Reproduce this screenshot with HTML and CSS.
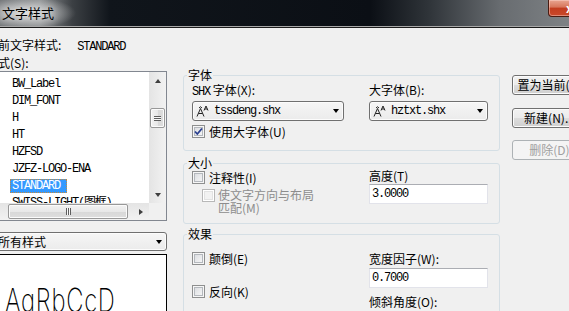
FILE: index.html
```html
<!DOCTYPE html>
<html lang="zh-CN">
<head>
    <meta charset="UTF-8">
    <title>文字样式</title>
    <link rel="stylesheet" href="styles.css">
</head>
<body>
    <div id="dialog">
        <div id="titlebar">
            <span class="title">文字样式</span>
            <span class="close-btn">x</span>
        </div>

        <div id="main">
            <!-- left: style list and preview -->
            <div class="left-col">
                <div class="current">当前文字样式:<span class="mono cur-name">STANDARD</span></div>
                <div class="caption">样式(S):</div>
                <div class="style-list">
                    <div class="list-items">
                        <div class="item mono">BW_Label</div>
                        <div class="item mono">DIM_FONT</div>
                        <div class="item mono">H</div>
                        <div class="item mono">HT</div>
                        <div class="item mono">HZFSD</div>
                        <div class="item mono">JZFZ-LOGO-ENA</div>
                        <div class="item mono selected">STANDARD</div>
                        <div class="item mono">SWISS-LIGHT(图框)</div>
                    </div>
                    <div class="vscroll">
                        <div class="sb-btn"><span class="tri up"></span></div>
                        <div class="sb-track v">
                            <div class="thumb v"><span class="grip h"></span></div>
                        </div>
                        <div class="sb-btn"><span class="tri down"></span></div>
                    </div>
                    <div class="hscroll">
                        <div class="sb-btn"><span class="tri left"></span></div>
                        <div class="sb-track h">
                            <div class="thumb h"><span class="grip v"></span></div>
                        </div>
                        <div class="sb-btn"><span class="tri right"></span></div>
                    </div>
                    <div class="corner"></div>
                </div>
                <div class="combo filter">所有样式<span class="arrow"></span></div>
                <div class="preview"><span class="sample">AgRbCcD</span></div>
            </div>

            <!-- middle: option groups -->
            <div class="groups">
                <fieldset class="group font-group">
                    <legend>字体</legend>
                    <div class="grid">
                        <div class="field-label"><span class="mono">SHX</span> 字体(X):</div>
                        <div class="field-label">大字体(B):</div>
                        <div class="combo">
                            <svg class="font-icon" width="13" height="12" viewBox="0 0 13 12">
                                <path d="M1 11.5 L4.5 3.5 L8 11.5 M2.6 8.5 H6.4 M3 3 Q4.5 0.5 6 3 M8 5.5 L10 1 L12 5.5 M8.8 4 H11.2" fill="none" stroke="#222" stroke-width="1"/>
                            </svg>
                            <span class="mono">tssdeng.shx</span>
                            <span class="arrow"></span>
                        </div>
                        <div class="combo">
                            <svg class="font-icon" width="13" height="12" viewBox="0 0 13 12">
                                <path d="M1 11.5 L4.5 3.5 L8 11.5 M2.6 8.5 H6.4 M3 3 Q4.5 0.5 6 3 M8 5.5 L10 1 L12 5.5 M8.8 4 H11.2" fill="none" stroke="#222" stroke-width="1"/>
                            </svg>
                            <span class="mono">hztxt.shx</span>
                            <span class="arrow"></span>
                        </div>
                        <div class="check">
                            <span class="box">
                                <svg width="11" height="11" viewBox="0 0 11 11">
                                    <path d="M2 5.5 L4.3 8 L9 2.5" fill="none" stroke="#2a3f8f" stroke-width="1.8"/>
                                </svg>
                            </span>
                            使用大字体(U)
                        </div>
                    </div>
                </fieldset>

                <fieldset class="group size-group">
                    <legend>大小</legend>
                    <div class="grid">
                        <div class="cell">
                            <div class="check"><span class="box"></span>注释性(I)</div>
                            <div class="check sub disabled">
                                <span class="box"></span>
                                <span class="two-line">使文字方向与布局<br>匹配(M)</span>
                            </div>
                        </div>
                        <div class="cell">
                            <div class="field-label tight">高度(T)</div>
                            <div class="input mono">3.0000</div>
                        </div>
                    </div>
                </fieldset>

                <fieldset class="group effect-group">
                    <legend>效果</legend>
                    <div class="grid">
                        <div class="cell left-checks">
                            <div class="check"><span class="box"></span>颠倒(E)</div>
                            <div class="check second"><span class="box"></span>反向(K)</div>
                        </div>
                        <div class="cell right-fields">
                            <div class="field-label">宽度因子(W):</div>
                            <div class="input mono">0.7000</div>
                            <div class="field-label gap">倾斜角度(O):</div>
                            <div class="input mono">0</div>
                        </div>
                    </div>
                </fieldset>
            </div>

            <!-- right: command buttons -->
            <div class="buttons">
                <div class="btn">置为当前(C)</div>
                <div class="btn">新建(N)...</div>
                <div class="btn disabled">删除(D)</div>
            </div>
        </div>
    </div>
</body>
</html>
```

FILE: styles.css
```css
body {
    margin: 0;
    padding: 0;
    width: 569px;
    height: 311px;
    overflow: hidden;
    background-color: #f0f0f0;
    color: #000000;
    font-family: "Noto Sans CJK SC", "DejaVu Sans", sans-serif;
    font-size: 12px;
}

.mono {
    font-family: "Liberation Mono", "Noto Sans CJK SC", monospace;
    font-size: 12px;
    letter-spacing: -1.2px;
}

/* title bar */
#titlebar {
    display: flex;
    justify-content: space-between;
    height: 26px;
    border-bottom: 1px solid #a8a8a8;
    box-shadow: 0 1px 0 #1c1c1c;
    background:
        radial-gradient(ellipse 50px 16px at 26px 13px, rgba(225, 225, 225, 0.95), rgba(200, 200, 200, 0)),
        linear-gradient(90deg, #707376 0, #8d9092 40px, #3c4044 72px, #10151b 110px, #0b0f15 370px, #30353a 430px, #686c70 500px, #7e8285 569px);
}

.title {
    padding-left: 2px;
    line-height: 26px;
    font-size: 13px;
    color: #000000;
    text-shadow: 0 0 6px #e8e8e8;
}

.close-btn {
    width: 43px;
    height: 17px;
    margin-right: -22px;
    padding-left: 17px;
    box-sizing: border-box;
    border: 1px solid #4a1c12;
    border-top: none;
    border-radius: 0 0 4px 4px;
    background: linear-gradient(#e9a591 0, #d7755a 45%, #c23d1f 50%, #c9482b 100%);
    box-shadow: inset 0 0 0 1px rgba(255, 220, 210, 0.45);
    color: #ffffff;
    font-weight: bold;
    font-size: 12px;
    line-height: 15px;
}

#main {
    display: flex;
    gap: 16px;
    margin-top: 2px;
    margin-left: -14px;
}

/* left column */
.left-col {
    width: 181px;
    flex-shrink: 0;
}

.current {
    margin-top: 8px;
    line-height: 16px;
    white-space: nowrap;
}

.cur-name {
    margin-left: 16px;
}

.caption {
    line-height: 16px;
}

.style-list {
    display: grid;
    grid-template-columns: 1fr 17px;
    grid-template-rows: 131px 17px;
    height: 150px;
    box-sizing: border-box;
    border: 1px solid #828790;
    background-color: #ffffff;
}

.list-items {
    overflow: hidden;
    padding-top: 2px;
    padding-left: 23px;
}

.item {
    width: fit-content;
    height: 14px;
    margin-top: 3px;
    padding: 0 7px 0 2px;
    line-height: 14px;
    white-space: nowrap;
    box-sizing: border-box;
}

.item.selected {
    background-color: #3399ff;
    color: #ffffff;
    outline: 1px dotted #c98a3a;
    outline-offset: -1px;
}

.vscroll {
    display: flex;
    flex-direction: column;
    background: linear-gradient(90deg, #e4e4e4, #f2f2f2);
}

.hscroll {
    display: flex;
    background: linear-gradient(#e4e4e4, #f2f2f2);
}

.corner {
    background-color: #f0f0f0;
}

.sb-btn {
    width: 17px;
    height: 17px;
    flex-shrink: 0;
    display: flex;
    align-items: center;
    justify-content: center;
}

.sb-track {
    flex: 1;
}

.thumb {
    box-sizing: border-box;
    border: 1px solid #989898;
    border-radius: 2px;
    display: flex;
    align-items: center;
    justify-content: center;
    box-shadow: inset 0 0 0 1px #fbfbfb;
}

.thumb.v {
    margin: 19px 1px 0 1px;
    height: 20px;
    background: linear-gradient(90deg, #f2f2f2, #e8e8e8 50%, #d8d8d8 51%, #dedede);
}

.thumb.h {
    margin: 1px 0 0 4px;
    width: 120px;
    height: 15px;
    background: linear-gradient(#f2f2f2, #e8e8e8 50%, #d8d8d8 51%, #dedede);
}

.grip.h {
    width: 7px;
    height: 5px;
    background: repeating-linear-gradient(#5e5e5e 0 1px, #f8f8f8 1px 2px);
}

.grip.v {
    width: 5px;
    height: 7px;
    background: repeating-linear-gradient(90deg, #5e5e5e 0 1px, #f8f8f8 1px 2px);
}

.tri {
    width: 0;
    height: 0;
}

.tri.up {
    border-left: 3.5px solid transparent;
    border-right: 3.5px solid transparent;
    border-bottom: 4px solid #3f3f3f;
}

.tri.down {
    border-left: 3.5px solid transparent;
    border-right: 3.5px solid transparent;
    border-top: 4px solid #3f3f3f;
}

.tri.left {
    border-top: 3.5px solid transparent;
    border-bottom: 3.5px solid transparent;
    border-right: 4px solid #3f3f3f;
}

.tri.right {
    border-top: 3.5px solid transparent;
    border-bottom: 3.5px solid transparent;
    border-left: 4px solid #3f3f3f;
}

/* combo boxes */
.combo {
    display: flex;
    align-items: center;
    height: 20px;
    box-sizing: border-box;
    padding-left: 3px;
    border: 1px solid #707070;
    border-radius: 3px;
    background: linear-gradient(#f6f6f6, #ebebeb);
    box-shadow: inset 0 0 0 1px #fcfcfc;
    white-space: nowrap;
}

.font-icon {
    margin-right: 5px;
    flex-shrink: 0;
}

.arrow {
    margin-left: auto;
    margin-right: 4px;
    border-left: 3.5px solid transparent;
    border-right: 3.5px solid transparent;
    border-top: 4px solid #000000;
}

.combo.filter {
    height: 19px;
    margin-top: 11px;
    padding-left: 11px;
}

.preview {
    height: 80px;
    margin-top: 3px;
    border: 1px solid #000000;
    background-color: #ffffff;
    overflow: hidden;
}

.sample {
    display: inline-block;
    margin: 25px 0 0 18px;
    font-family: Inter, "DejaVu Sans", sans-serif;
    font-weight: 200;
    font-size: 33px;
    line-height: 40px;
    letter-spacing: 1px;
    transform: scaleX(0.72);
    transform-origin: left top;
}

/* option groups */
.groups {
    width: 317px;
    flex-shrink: 0;
    margin-top: 40px;
}

.group {
    margin: 0;
    padding: 0 11px 10px 8px;
    border: 1px solid #d5dfe5;
    border-radius: 3px;
    min-width: 0;
}

.group legend {
    margin-left: -5px;
    padding: 0 1px;
    line-height: 12px;
}

.grid {
    display: grid;
    grid-template-columns: 152px 119px;
    column-gap: 25px;
}

.font-group {
    padding-bottom: 11px;
}

.font-group .grid {
    grid-template-rows: 16px 20px 15px;
    row-gap: 3px;
    padding-top: 1px;
}

.field-label {
    line-height: 16px;
    white-space: nowrap;
}

.field-label.tight {
    line-height: 14px;
}

.field-label.gap {
    margin-top: 6px;
}

.check {
    display: flex;
    align-items: center;
    gap: 4px;
    height: 16px;
    white-space: nowrap;
}

.font-group .check {
    height: 15px;
}

.box {
    width: 13px;
    height: 13px;
    flex-shrink: 0;
    box-sizing: border-box;
    border: 1px solid #8e8f8f;
    background: linear-gradient(135deg, #d6d8dc, #fbfbfb);
    box-shadow: inset 0 0 0 1px #f6f6f6, inset 0 0 0 2px #b4b8bd;
    display: flex;
    align-items: center;
    justify-content: center;
}

.check.sub {
    align-items: flex-start;
    height: auto;
    margin-top: 3px;
    padding-left: 10px;
    gap: 3px;
}

.check.disabled {
    color: #8d8d8d;
}

.check.disabled .box {
    margin-top: 1px;
    border-color: #b8b8b8;
    background: #f2f2f2;
    box-shadow: inset 0 0 0 1px #ffffff, inset 0 0 0 2px #e2e2e2;
}

.two-line {
    line-height: 13px;
}

.input {
    height: 20px;
    box-sizing: border-box;
    margin-top: 1px;
    padding-left: 2px;
    border: 1px solid #e2e3ea;
    border-top-color: #abadb3;
    background-color: #ffffff;
    line-height: 18px;
}

.size-group {
    margin-top: 6px;
    padding-bottom: 9px;
}

.effect-group {
    margin-top: 4px;
}

.left-checks {
    padding-top: 10px;
}

.check.second {
    margin-top: 17px;
}

.right-fields {
    padding-top: 11px;
}

/* buttons */
.buttons {
    display: flex;
    flex-direction: column;
    width: 75px;
    flex-shrink: 0;
    margin-top: 46px;
    margin-left: -4px;
}

.btn {
    height: 20px;
    box-sizing: border-box;
    margin-bottom: 13px;
    border: 1px solid #707070;
    border-radius: 3px;
    background: linear-gradient(#f2f2f2 0, #ebebeb 50%, #dddddd 51%, #cfcfcf 100%);
    box-shadow: inset 0 0 0 1px #fcfcfc;
    text-align: center;
    line-height: 18px;
    white-space: nowrap;
}

.btn:nth-child(2) {
    margin-bottom: 12px;
}

.btn.disabled {
    border-color: #adb2b5;
    background: #f4f4f4;
    box-shadow: none;
    color: #a0a0a0;
}
```
